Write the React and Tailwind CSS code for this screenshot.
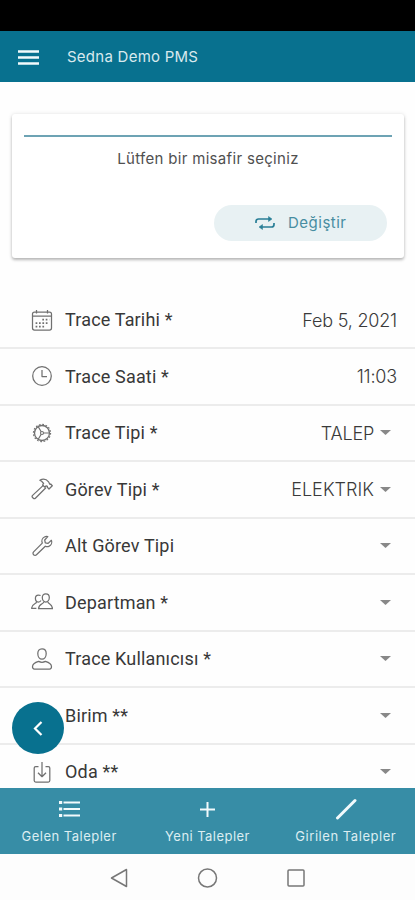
import React from 'react';

const icons = {
  calendar: (
    <>
      <rect x="1.5" y="3" width="19" height="18" rx="2" />
      <path d="M1.5 7h19M5.5 1v3.5M16.5 1v3.5" />
      <path d="M11.3 10.7h7M4.6 14.2h13.6M4.6 17.7h10.2" strokeWidth="1.7" strokeDasharray="1.7 1.7" />
    </>
  ),
  clock: (
    <>
      <circle cx="11" cy="11" r="9.3" />
      <path d="M11 5v6.5h5" />
    </>
  ),
  gear: (
    <>
      <circle cx="11" cy="11" r="8.6" strokeWidth="1.1" strokeDasharray="1.7 1.68" />
      <circle cx="11" cy="11" r="7.5" strokeWidth="1.3" />
      <circle cx="11" cy="11" r="1.5" strokeWidth="1.1" />
      <path d="M12.5 11H18M10.2 9.7 7.4 5M10.2 12.3 7.4 17" strokeWidth="1.2" />
    </>
  ),
  hammer: (
    <>
      <path d="M12.3 7.4 1.6 17.4a1.5 1.5 0 0 0 0 2.1l.7.7a1.5 1.5 0 0 0 2.1 0L14.9 9.8" />
      <path d="M8.800 2.200c3.200-1.600 6.600-1 8.800 1.700.8.9.5 1.900 1.300 2.400l.8-.3 1.600 1.700-3.300 3.300-1.700-1.700.1-1-1.200-.5-1.300 1.400-2.300-2.200 1-1.500c-1-1.300-2.300-2.700-3.800-3.300Z" />
    </>
  ),
  wrench: (
    <path d="M16.8 1.6 13.7 5l.6 2.8 2.8.6 3.3-3.1c.9 2.4-.1 5.1-2.500 6-1.200.5-2.500.4-3.600-.1l-8.800 8.600a2 2 0 0 1-2.900-2.900l8.700-8.800c-1-2.300-.1-5 2.100-6.100 1.100-.6 2.300-.7 3.400-.4Z" />
  ),
  users: (
    <>
      <path d="M14.8 2.800c2.300 0 3.500 1.600 3.500 3.800 0 2.400-1.500 4.400-3.500 4.400s-3.500-2-3.500-4.400c0-2.200 1.200-3.800 3.500-3.800Z" />
      <path d="M12.900 10.800c-.2 2.300-5 1.600-5.400 6.900h14c-.3-5.300-4.300-4.600-4.600-6.900" />
      <path d="M9.600 4.600c-.7-.5-1.500-.6-2.200-.6-2 0-3 1.400-3 3.300 0 2 1.200 3.700 3 3.700 1.200 0 2.100-.6 2.600-1.500M5.600 10.800C5.300 13.200.9 12.300.6 17.300h4.800" />
    </>
  ),
  user: (
    <>
      <path d="M11 .8c2.900 0 4.200 1.900 4.200 4.700 0 3.100-1.800 5.700-4.200 5.700S6.800 8.600 6.800 5.500C6.800 2.700 8.100.8 11 .8Z" />
      <path d="M7.600 13.400c-3.400 1-6.100 2-6.100 5.400 0 1.500.8 2.200 2 2.200h15c1.200 0 2-.7 2-2.200 0-3.400-2.700-4.400-6.100-5.400-1.900 1-4.900 1-6.800 0Z" />
    </>
  ),
  download: (
    <>
      <path d="M7.500 5.500H4.700a1.500 1.500 0 0 0-1.500 1.500v12.500A1.500 1.500 0 0 0 4.700 21h12.600a1.500 1.500 0 0 0 1.500-1.500V7a1.500 1.500 0 0 0-1.500-1.500h-2.800" />
      <path d="M11 1v14.500M7 11.700l4 4 4-4" />
    </>
  ),
};

const rows = [
  { label: 'Trace Tarihi *', icon: 'calendar', value: 'Feb 5, 2021', spacing: 'tracking-[-0.2px]' },
  { label: 'Trace Saati *', icon: 'clock', value: '11:03', spacing: 'tracking-[-0.2px]' },
  { label: 'Trace Tipi *', icon: 'gear', value: 'TALEP', spacing: 'tracking-[-0.2px]', select: true },
  { label: 'Görev Tipi *', icon: 'hammer', value: 'ELEKTRIK', spacing: 'tracking-[0.05px]', select: true },
  { label: 'Alt Görev Tipi', icon: 'wrench', select: true },
  { label: 'Departman *', icon: 'users', select: true },
  { label: 'Trace Kullanıcısı *', icon: 'user', select: true },
  { label: 'Birim **', select: true },
  { label: 'Oda **', icon: 'download', select: true },
];

const FormRow = ({ label, icon, value, spacing, select }) => (
  <div className="flex h-[56.5px] shrink-0 items-center border-b-2 border-[#ececec] pl-[31px]">
    <svg className="size-[22px] shrink-0" viewBox="0 0 22 22" fill="none" stroke="#707070" strokeWidth="1.25" strokeLinejoin="round">
      {icons[icon]}
    </svg>
    <span className="ml-3 flex-1 whitespace-nowrap text-[18px] tracking-[0.17px] text-[#383838]">{label}</span>
    {value && (
      <span className={`pt-px font-['Inter',sans-serif] text-[18px] font-light text-[#3a3a3a] ${spacing} ${select ? '' : 'mr-[18px]'}`}>
        {value}
      </span>
    )}
    {select && (
      <svg className="mr-6 ml-[6px] h-[5px] w-[11px]" viewBox="0 0 11 5">
        <path d="M0 0h11L5.5 5Z" fill="#888" />
      </svg>
    )}
  </div>
);

const Tab = ({ label, className, children }) => (
  <div className="flex flex-1 flex-col items-center pt-[10px] text-white">
    <svg className="size-[22px]" viewBox="0 0 22 22" fill="none" stroke="#f2fafc" strokeWidth="2.2">
      {children}
    </svg>
    <span className={`mt-[6px] whitespace-nowrap font-['Inter',sans-serif] text-[13px] leading-5 text-[#dceef2] ${className}`}>{label}</span>
  </div>
);

const App = () => {
  return (
    <div className="relative flex h-[900px] w-[415px] flex-col overflow-hidden bg-[#fefefe] font-['Roboto',sans-serif]">
      <div className="h-[31px] shrink-0 bg-black" />
      <header className="flex h-[51px] shrink-0 items-center bg-[#08718f] pt-px pl-[18px]">
        <svg className="h-[15px] w-[21px]" viewBox="0 0 21 15" stroke="#f2fafc" strokeWidth="2.6">
          <path d="M0 1.5h21M0 7.5h21M0 13.5h21" />
        </svg>
        <h1 className="ml-7 pt-px font-['Inter',sans-serif] text-[15px] tracking-[0.25px] text-[#d8e9ee]">Sedna Demo PMS</h1>
      </header>

      <section className="mr-[11px] ml-3 mt-8 flex h-[144px] shrink-0 flex-col rounded-[3px] bg-white px-3 pt-[21px] shadow-[0_2px_3px_rgba(0,0,0,0.25),0_0_4px_rgba(0,0,0,0.1)]">
        <div className="h-[2px] shrink-0 bg-[#6da3b4]" />
        <p className="mt-[10px] text-center font-['Inter',sans-serif] text-[15px] leading-6 tracking-[0.32px] text-[#505050]">Lütfen bir misafir seçiniz</p>
        <button className="mt-[34px] mr-[5px] flex h-9 w-[173px] shrink-0 items-center self-end rounded-full bg-[#e8f1f3] pl-[41px]">
          <svg className="h-[14px] w-5" viewBox="0 0 20 14" fill="none" stroke="#287e96" strokeWidth="1.7">
            <path d="M1 7V5.5C1 4 2 3 3.5 3H15M19 7v1.5C19 10 18 11 16.5 11H6" />
            <path d="m13.5.5 3.5 2.5-3.5 2.5ZM7.5 8.5 4 11l3.5 2.5Z" fill="#287e96" strokeWidth=".5" />
          </svg>
          <span className="ml-[13px] pt-px font-['Inter',sans-serif] text-[15px] tracking-[0.5px] text-[#478da1]">Değiştir</span>
        </button>
      </section>

      <main className="mt-[34.5px] flex min-h-0 flex-1 flex-col overflow-hidden">
        {rows.map((row) => (
          <FormRow key={row.label} {...row} />
        ))}
      </main>

      <nav className="flex h-[66px] shrink-0 bg-[#378da6]">
        <Tab label="Gelen Talepler" className="tracking-[0.5px]">
          <path d="M5.5 4.5H22M5.5 11H22M5.5 17.5H22" />
          <path d="M1 4.5h3.2M1 11h3.2M1 17.5h3.2" strokeWidth="3" />
        </Tab>
        <Tab label="Yeni Talepler" className="tracking-[0.45px]">
          <path d="M11.5 4v15M4 11.5h15" strokeWidth="2" />
        </Tab>
        <Tab label="Girilen Talepler" className="tracking-[0.55px]">
          <path d="M2.5 20 20 2.5" strokeWidth="3" strokeLinecap="round" />
        </Tab>
      </nav>

      <footer className="flex h-[46px] shrink-0 items-center bg-[#fdfdfd] pt-px pl-[110px]">
        <svg className="h-5 w-[196px]" viewBox="0 0 196 20" fill="none" stroke="#777" strokeWidth="1.5" strokeLinejoin="round">
          <path d="M16.5 1.5v17L1.5 10Z" />
          <circle cx="97.5" cy="10" r="9" />
          <rect x="178" y="2" width="16" height="16" rx="1" />
        </svg>
      </footer>

      <button className="absolute top-[702px] left-3 flex size-[52px] items-center justify-center rounded-full bg-[#08718f]">
        <svg className="h-[15px] w-[10px]" viewBox="0 0 10 15" fill="none" stroke="white" strokeWidth="2.2">
          <path d="M8.5 1 2 7.5 8.5 14" />
        </svg>
      </button>
    </div>
  );
};

export default App;
